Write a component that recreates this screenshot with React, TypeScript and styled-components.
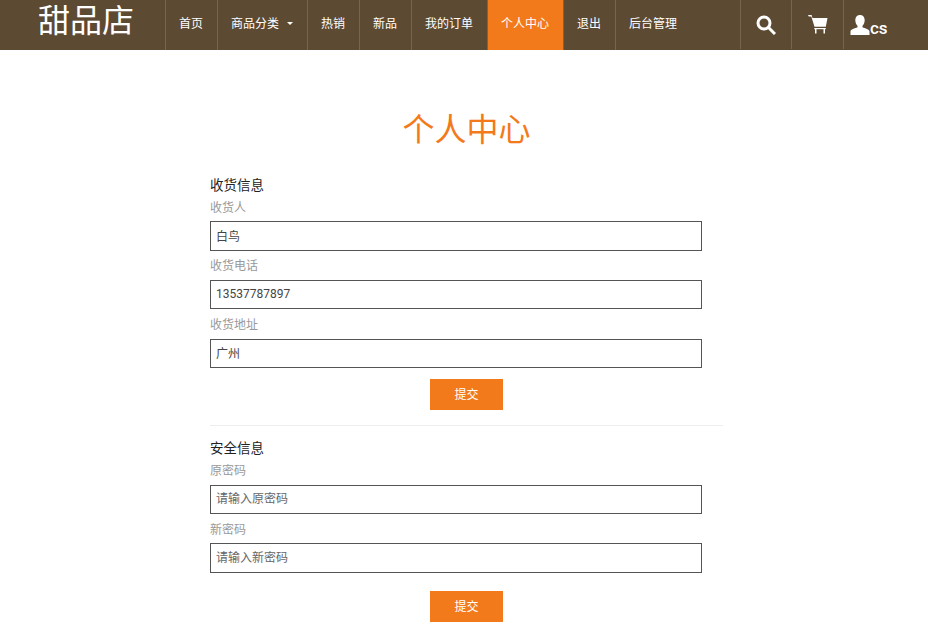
import React from "react";
import styled, { createGlobalStyle } from "styled-components";

const Global = createGlobalStyle`
  html, body { margin: 0; padding: 0; background: #fff; }
  body { font-family: Roboto, "Noto Sans CJK SC", sans-serif; font-size: 12px; color: #333; }
  * { box-sizing: border-box; }
`;

const Nav = styled.nav`
  display: flex;
  height: 50px;
  background: #5d4a33;
`;
const Brand = styled.div`
  width: 165px;
  padding-left: 38px;
  font-size: 32px;
  line-height: 42px;
  color: #fff;
  font-weight: 400;
`;
const Menu = styled.div`
  display: flex;
  flex: 1;
`;
const Item = styled.a<{ $active?: boolean; $w?: number }>`
  display: flex;
  align-items: center;
  padding: 0 0 5px 13px;
  width: ${(p) => p.$w ?? 52}px;
  border-left: 1px solid #78654c;
  font-size: 12px;
  font-weight: 400;
  color: #fff;
  background: ${(p) => (p.$active ? "#f37a1b" : "transparent")};
`;
const Caret = styled.span`
  width: 0;
  height: 0;
  margin-left: 8px;
  margin-top: 2px;
  border-left: 3px solid transparent;
  border-right: 3px solid transparent;
  border-top: 3px solid #fff;
`;
const Tools = styled.div`
  display: flex;
  width: 188px;
`;
const Tool = styled.a<{ $w: number }>`
  display: flex;
  align-items: center;
  justify-content: center;
  width: ${(p) => p.$w}px;
  height: 49px;
  padding-top: 1px;
  border-left: 1px solid #78654c;
  color: #fff;
`;
const UserTool = styled(Tool)`
  justify-content: flex-start;
  padding-left: 6px;
`;
const UserName = styled.span`
  align-self: flex-end;
  margin: 0 0 12px 0;
  font-size: 17px;
  line-height: 17px;
  font-weight: 500;
`;
const Main = styled.main`
  width: 513px;
  margin: 0 0 0 210px;
`;
const Title = styled.h1`
  margin: 59px 0 25px;
  font-size: 32px;
  line-height: 42px;
  font-weight: 400;
  text-align: center;
  color: #f37a1b;
`;
const Heading = styled.h2<{ $after?: number }>`
  margin: 0 0 ${(p) => p.$after ?? 0}px;
  font-size: 13.5px;
  line-height: 18px;
  font-weight: 400;
  color: #222;
`;
const Field = styled.label<{ $gap?: number }>`
  display: block;
  width: 492px;
  margin-bottom: ${(p) => p.$gap ?? 2.2}px;
`;
const LabelText = styled.span<{ $top?: number }>`
  display: block;
  height: 27px;
  padding-top: ${(p) => p.$top ?? 4}px;
  font-size: 12px;
  line-height: 18px;
  color: #999;
`;
const Input = styled.input`
  display: block;
  width: 492px;
  height: 29.6px;
  padding: 0 5px 1px;
  border: 1px solid #555;
  border-radius: 0;
  outline: none;
  background: #fff;
  font-family: inherit;
  font-size: 12px;
  color: #444;
  &::placeholder { color: #666; opacity: 1; }
`;
const SubmitRow = styled.div`
  display: flex;
  justify-content: center;
`;
const Submit = styled.button`
  width: 73px;
  height: 31px;
  padding: 0 0 2px;
  border: 0;
  background: #f37a1b;
  color: #fff;
  font-family: inherit;
  font-size: 12px;
`;
const Rule = styled.hr`
  height: 1px;
  margin: 15px 0 13px;
  border: 0;
  background: #eeeeee;
`;

const SearchIcon = () => (
  <svg width="20" height="20" viewBox="0 0 20 20" fill="none" stroke="#fff">
    <circle cx="8" cy="8" r="6" strokeWidth="3" />
    <path d="M12.500 12.500 19 19" strokeWidth="3" />
  </svg>
);
const CartIcon = () => (
  <svg width="20" height="20" viewBox="0 0 20 20" fill="#fff">
    <path d="M0 0h3.600l.8 3H19.500l-1.700 8.800H6.500L3.300 1.600H0.800z" />
    <path d="M6.300 13h11.500v1.200H6.300z" />
    <rect x="7" y="14" width="1.500" height="4.500" />
    <rect x="15.500" y="14" width="1.500" height="4.500" />
  </svg>
);
const UserIcon = () => (
  <svg width="20" height="20" viewBox="0 0 20 20" fill="#fff">
    <path d="M10 0c3 0 4.700 2.200 4.700 5.300 0 2.200-1 4.300-2.200 5.500v1.500c2.600 1 7 2.200 7 4.200V20H0.500v-3.500c0-2 4.400-3.200 7-4.200v-1.500C6.300 9.600 5.300 7.500 5.300 5.300 5.300 2.200 7 0 10 0z" />
  </svg>
);

export default function App() {
  return (
    <>
      <Global />
      <Nav>
        <Brand>甜品店</Brand>
        <Menu>
          <Item>首页</Item>
          <Item $w={90}>商品分类<Caret /></Item>
          <Item>热销</Item>
          <Item>新品</Item>
          <Item $w={76}>我的订单</Item>
          <Item $w={76} $active>个人中心</Item>
          <Item>退出</Item>
          <Item $w={76}>后台管理</Item>
        </Menu>
        <Tools>
          <Tool $w={51}><SearchIcon /></Tool>
          <Tool $w={52}><CartIcon /></Tool>
          <UserTool $w={85}><UserIcon /><UserName>cs</UserName></UserTool>
        </Tools>
      </Nav>
      <Main>
        <Title>个人中心</Title>
        <Heading>收货信息</Heading>
        <Field><LabelText $top={5}>收货人</LabelText><Input defaultValue="白鸟" /></Field>
        <Field><LabelText>收货电话</LabelText><Input defaultValue="13537787897" /></Field>
        <Field $gap={10.8}><LabelText>收货地址</LabelText><Input defaultValue="广州" /></Field>
        <SubmitRow><Submit>提交</Submit></SubmitRow>
        <Rule />
        <Heading $after={0.6}>安全信息</Heading>
        <Field><LabelText>原密码</LabelText><Input placeholder="请输入原密码" /></Field>
        <Field $gap={18}><LabelText $top={5}>新密码</LabelText><Input placeholder="请输入新密码" /></Field>
        <SubmitRow><Submit>提交</Submit></SubmitRow>
      </Main>
    </>
  );
}
